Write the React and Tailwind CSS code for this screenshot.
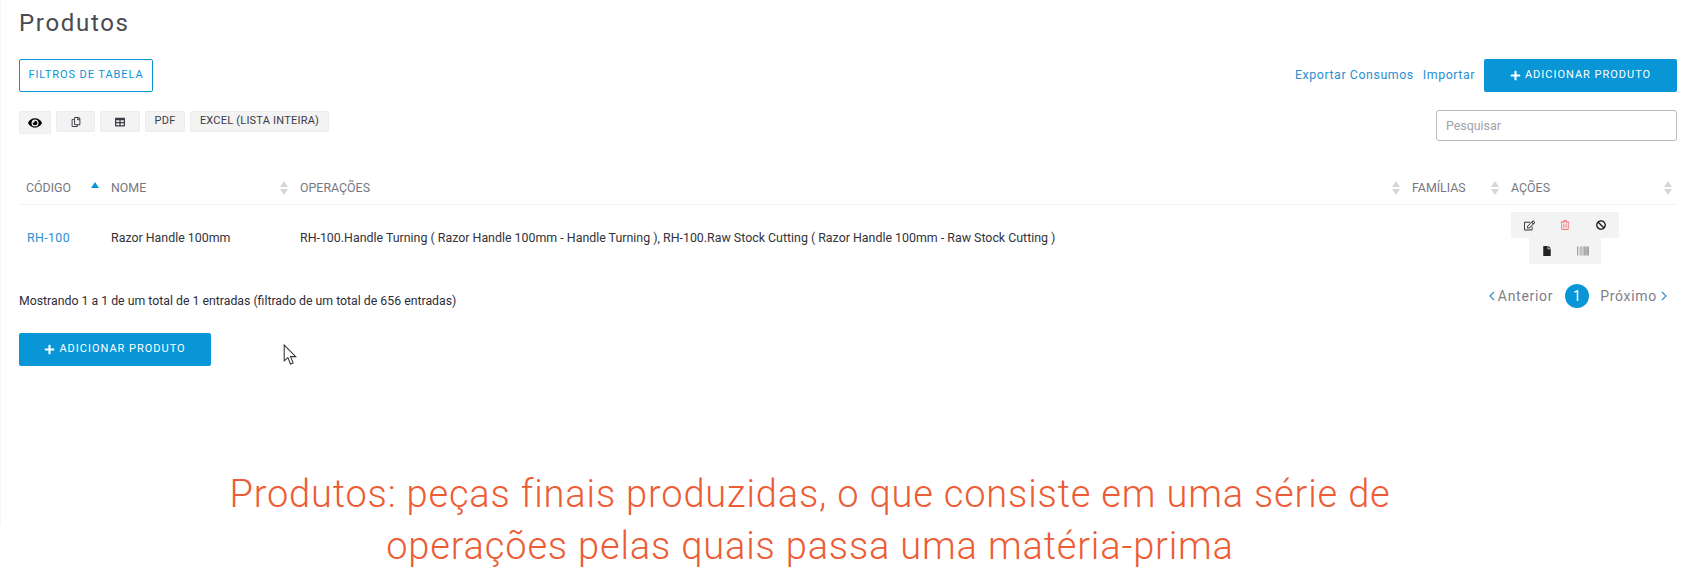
import { FaEye, FaRegCopy, FaTable, FaPlus, FaRegEdit, FaRegTrashAlt, FaBan, FaFile, FaBarcode } from 'react-icons/fa'

const font = { fontFamily: 'Roboto, "Noto Sans", sans-serif' }

function SortIcon({ active }) {
  if (active) {
    return (
      <svg width="8" height="6" viewBox="0 0 8 6" className="mb-1.5 shrink-0">
        <path d="M4 0 8 6H0Z" fill="#0896d7" />
      </svg>
    )
  }
  return (
    <svg width="8" height="14" viewBox="0 0 8 14" className="shrink-0">
      <path d="M4 0 8 6H0Z M4 14 0 8H8Z" fill="#d6d6d6" />
    </svg>
  )
}

function HeaderCell({ label, active, className }) {
  return (
    <div className={`flex items-center justify-between pl-[7px] pr-[5px] ${className}`}>
      <span>{label}</span>
      <SortIcon active={active} />
    </div>
  )
}

function ToolButton({ children, className = '' }) {
  return (
    <button className={`flex items-center justify-center bg-[#f3f3f3] border border-[#ececec] rounded-[2px] text-[11px] tracking-[0.02em] text-[#3c3c46] ${className}`}>
      {children}
    </button>
  )
}

function AddButton({ className = '' }) {
  return (
    <button className={`h-[33px] flex items-center justify-center gap-[4px] bg-[#0896d7] rounded-[2px] text-white text-[11px] tracking-[0.09em] ${className}`}>
      <FaPlus className="text-[11px]" />
      ADICIONAR PRODUTO
    </button>
  )
}

function Chevron({ d }) {
  return (
    <svg width="6" height="10" viewBox="0 0 6 10" className="shrink-0">
      <path d={d} fill="none" stroke="#2b8fd0" strokeWidth="1.2" />
    </svg>
  )
}

export default function App() {
  return (
    <div className="flex w-[1696px] h-[579px] bg-white overflow-hidden" style={font}>
      <div className="w-[1px] h-[525px] bg-[#f6f6f6] shrink-0" />
      <div className="flex-1 pl-[18px] pr-[19px]">
        <h1 className="pt-[8px] h-[59px] text-[24px] leading-[30px] tracking-[0.07em] text-[#4a4a50]">Produtos</h1>

        <div className="flex justify-between items-center h-[33px]">
          <button className="w-[134px] h-[33px] border border-[#0896d7] rounded-[2px] text-[#0896d7] text-[11px] tracking-[0.085em]">
            FILTROS DE TABELA
          </button>
          <div className="flex items-center text-[12.4px] tracking-[0.045em] text-[#2b8fd0]">
            <a>Exportar Consumos</a>
            <a className="ml-[9px]">Importar</a>
            <AddButton className="w-[193px] ml-[9px]" />
          </div>
        </div>

        <div className="flex justify-between items-start mt-[18px]">
          <div className="flex gap-[5px] pt-[1px]">
            <ToolButton className="w-[32px] h-[23px]"><FaEye className="text-[14px] text-black" /></ToolButton>
            <ToolButton className="w-[39px] h-[21px]"><FaRegCopy className="text-[10px]" /></ToolButton>
            <ToolButton className="w-[40px] h-[21px]"><FaTable className="text-[10px]" /></ToolButton>
            <ToolButton className="w-[40px] h-[21px]">PDF</ToolButton>
            <ToolButton className="w-[139px] h-[21px]">EXCEL (LISTA INTEIRA)</ToolButton>
          </div>
          <input
            placeholder="Pesquisar"
            className="w-[241px] h-[31px] px-[9px] border border-[#b9b9c3] rounded-[3px] text-[12.4px] placeholder:text-[#a2a2aa] outline-none"
          />
        </div>

        <div className="flex items-center h-[38px] pt-[5px] mt-[26px] border-b border-[#f3f3f3] text-[12.4px] text-[#77777f]">
          <HeaderCell label="CÓDIGO" active className="w-[85px]" />
          <HeaderCell label="NOME" className="w-[189px]" />
          <HeaderCell label="OPERAÇÕES" className="w-[1112px]" />
          <HeaderCell label="FAMÍLIAS" className="w-[99px]" />
          <HeaderCell label="AÇÕES" className="w-[173px]" />
        </div>

        <div className="flex items-start h-[68px] text-[12.4px] text-[#33333a]">
          <div className="w-[85px] pl-[8px] pt-[24px] text-[#2b8fd0] tracking-[0.03em]">RH-100</div>
          <div className="w-[189px] pl-[7px] pt-[24px]">Razor Handle 100mm</div>
          <div className="w-[1112px] pl-[7px] pt-[24px]">
            RH-100.Handle Turning ( Razor Handle 100mm - Handle Turning ), RH-100.Raw Stock Cutting ( Razor Handle 100mm - Raw Stock Cutting )
          </div>
          <div className="w-[99px]" />
          <div className="w-[173px] pt-[7px] pl-[7px]">
            <div className="flex w-[108px] h-[26px] items-center justify-around bg-[#f3f3f3]">
              <FaRegEdit className="text-[11px] text-[#33333a]" />
              <FaRegTrashAlt className="text-[10px] text-[#f2777a]" />
              <FaBan className="text-[10px] text-[#111]" />
            </div>
            <div className="flex w-[72px] h-[26px] ml-[18px] items-center justify-around bg-[#f3f3f3]">
              <FaFile className="text-[10px] text-[#222]" />
              <FaBarcode className="text-[12px] text-[#777]" />
            </div>
          </div>
        </div>

        <div className="flex justify-between items-start h-[24px] mt-[11px]">
          <span className="pt-[9px] text-[12.3px] leading-[16px] text-[#2e2e38]">Mostrando 1 a 1 de um total de 1 entradas (filtrado de um total de 656 entradas)</span>
          <div className="flex items-center pr-[10px] text-[14px] tracking-[0.05em] text-[#80808a]">
            <Chevron d="M5 1 1 5l4 4" />
            <span className="ml-[3px]">Anterior</span>
            <span className="ml-[12px] mr-[11px] w-[24px] h-[24px] rounded-full bg-[#0896d7] text-white flex items-center justify-center">1</span>
            <span>Próximo</span>
            <span className="ml-[4px]"><Chevron d="M1 1l4 4-4 4" /></span>
          </div>
        </div>

        <div className="flex items-start gap-[72px] mt-[25px]">
          <AddButton className="w-[192px]" />
          <svg width="15" height="21" viewBox="0 0 14 20" className="mt-[11px]">
            <path d="M1 1v15l3.5-3 2.5 6 2.5-1-2.5-6h5Z" fill="#fff" stroke="#333" strokeWidth="1" />
          </svg>
        </div>

        <div className="mt-[102px] mr-[76px] text-center text-[38px] leading-[52px] font-light tracking-[0.022em] text-[#ec5c35]">
          Produtos: peças finais produzidas, o que consiste em uma série de
          <br />
          operações pelas quais passa uma matéria-prima
        </div>
      </div>
    </div>
  )
}
